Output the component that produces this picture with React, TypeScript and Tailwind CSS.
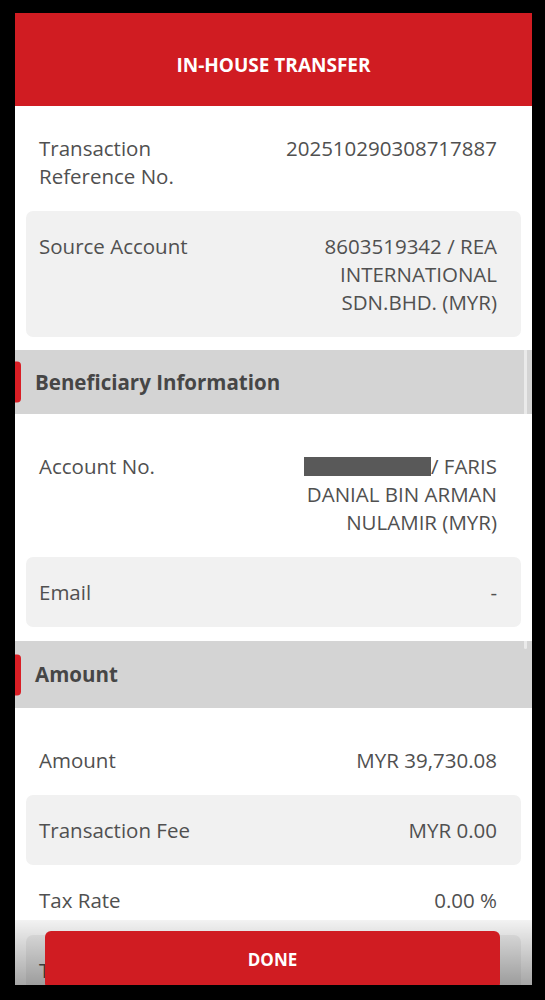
import React from 'react'

type Row = {
  label: string
  value: React.ReactNode
}

const font = { fontFamily: '"Open Sans", "Noto Sans", sans-serif' }

function DetailRow({ label, value, shaded }: Row & { shaded?: boolean }) {
  return (
    <div
      className={`grid grid-cols-[45%_55%] rounded-[7px] py-[21px] pl-[13px] pr-[24px] text-[20.5px] leading-[28px] text-[#505050] ${
        shaded ? 'bg-[#f1f1f1]' : ''
      }`}
    >
      <div>{label}</div>
      <div className="text-right">{value}</div>
    </div>
  )
}

function SectionHeader({ title, className }: { title: string; className: string }) {
  return (
    <div className={`relative -mx-[11px] mb-[17px] flex items-center bg-[#d4d4d4] pl-[20px] ${className}`}>
      <span className="absolute left-0 top-1/2 h-[41px] w-[6px] -translate-y-1/2 rounded-r-[4px] bg-[#d91e25]" />
      <span className="text-[20.5px] font-bold text-[#464646]">{title}</span>
    </div>
  )
}

export default function App() {
  return (
    <div className="h-[1000px] w-[545px] bg-black pt-[13px] pb-[15px] pl-[15px] pr-[13px]" style={font}>
      <div className="relative h-full w-full overflow-hidden bg-white">
        <div className="flex h-[93px] items-center justify-center bg-[#d01c22] pt-[11px]">
          <span className="text-[19px] font-bold text-white">IN-HOUSE TRANSFER</span>
        </div>

        <div className="px-[11px] pt-[7px]">
          <DetailRow label="Transaction Reference No." value="202510290308717887" />
          <DetailRow
            shaded
            label="Source Account"
            value={
              <>
                8603519342 / REA
                <br />
                INTERNATIONAL
                <br />
                SDN.BHD. (MYR)
              </>
            }
          />

          <SectionHeader title="Beneficiary Information" className="mt-[13px] h-[64px]" />
          <DetailRow
            label="Account No."
            value={
              <>
                <span className="inline-block h-[19px] w-[127px] bg-[#595959] align-[-2px]" />/ FARIS
                <br />
                DANIAL BIN ARMAN
                <br />
                NULAMIR (MYR)
              </>
            }
          />
          <DetailRow shaded label="Email" value="-" />

          <SectionHeader title="Amount" className="mt-[14px] h-[67px]" />
          <DetailRow label="Amount" value="MYR 39,730.08" />
          <DetailRow shaded label="Transaction Fee" value="MYR 0.00" />
          <DetailRow label="Tax Rate" value="0.00 %" />
          <DetailRow shaded label="Total Amount" value="MYR 39,730.08" />
        </div>

        {/* scrollbar thumb */}
        <div className="absolute right-[5px] top-[336px] h-[300px] w-[3px] rounded-full bg-white/50" />

        {/* bottom action bar */}
        <div className="absolute inset-x-0 bottom-0 h-[65px] bg-gradient-to-b from-black/5 to-black/35">
          <button className="ml-[30px] mt-[11px] flex h-[58px] w-[455px] items-center justify-center rounded-[6px] bg-[#d01c22] text-[17px] font-bold text-white">
            DONE
          </button>
        </div>
      </div>
    </div>
  )
}
